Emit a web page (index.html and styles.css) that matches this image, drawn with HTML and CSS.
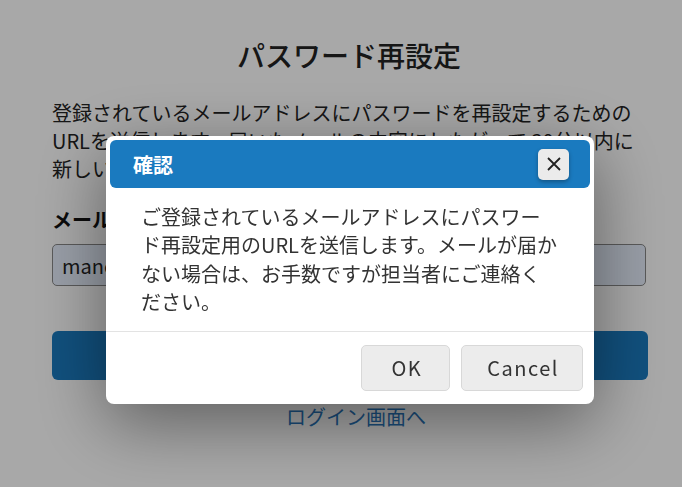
FILE: index.html
```html
<!DOCTYPE html>
<html lang="ja">
<head>
<meta charset="UTF-8">
<meta name="viewport" content="width=device-width, initial-scale=1.0">
<title>パスワード再設定</title>
<link rel="stylesheet" href="styles.css">
</head>
<body>
<div class="container">
    <h1>パスワード再設定</h1>
    <p class="lead">登録されているメールアドレスにパスワードを再設定するためのURLを送信します。届いたメールの内容にしたがって 30分以内に新しいパスワードを設定してください。</p>
    <form class="reset-form">
        <label for="email">メールアドレス</label>
        <input type="text" id="email" name="email" value="mancon@example.com">
        <button type="button" class="submit">送信する</button>
    </form>
    <a class="back-link" href="#">ログイン画面へ</a>
</div>

<div class="overlay">
    <div class="modal">
        <div class="modal-header">
            <span class="modal-title">確認</span>
            <button type="button" class="close" aria-label="閉じる">
                <svg width="14" height="14" viewBox="0 0 14 14"><path d="M1 1L13 13M13 1L1 13" stroke="#222" stroke-width="1.8" fill="none"/></svg>
            </button>
        </div>
        <div class="modal-body">ご登録されているメールアドレスにパスワード再設定用のURLを送信します。メールが届かない場合は、お手数ですが担当者にご連絡ください。</div>
        <div class="modal-footer">
            <button type="button" class="btn btn-ok">OK</button>
            <button type="button" class="btn">Cancel</button>
        </div>
    </div>
</div>
</body>
</html>
```
FILE: styles.css
```css
html {
    overflow: hidden;
}
body {
    font-family: "Noto Sans CJK JP", "Noto Sans", sans-serif;
    margin: 0;
    padding: 0;
    background-color: #fff;
    color: #333;
}
.container {
    width: 594px;
    padding: 35px 0 0 52px;
}
h1 {
    font-size: 28px;
    font-weight: 500;
    line-height: 40px;
    text-align: center;
    margin: 0 0 24px;
    color: #222;
}
.lead {
    font-size: 20px;
    line-height: 28px;
    margin: 0 0 23px;
    color: #222;
}
.reset-form label {
    display: block;
    font-size: 20px;
    font-weight: bold;
    line-height: 28px;
    margin-bottom: 10px;
    color: #111;
}
.reset-form input {
    display: block;
    width: 100%;
    height: 42px;
    padding: 0 9px;
    font-family: inherit;
    font-size: 20px;
    color: #222;
    background-color: #e8f0fe;
    border: 1px solid #888;
    border-radius: 5px;
    box-sizing: border-box;
}
.submit {
    display: block;
    width: 596px;
    height: 49px;
    margin-top: 45px;
    font-family: inherit;
    font-size: 20px;
    color: #fff;
    background-color: #1a7abf;
    border: none;
    border-radius: 6px;
}
.back-link {
    display: block;
    margin-top: 23px;
    padding-left: 14px;
    font-size: 20px;
    line-height: 28px;
    text-align: center;
    color: #2a77be;
    text-decoration: none;
}

/* dialog */
.overlay {
    position: fixed;
    inset: 0;
    background-color: rgba(0, 0, 0, 0.34);
    display: flex;
    align-items: flex-start;
    padding: 136px 0 0 106px;
}
.modal {
    width: 488px;
    background-color: #fff;
    border-radius: 8px;
    box-shadow: 0 18px 70px rgba(0, 0, 0, 0.45);
}
.modal-header {
    margin: 4px 4px 0;
    height: 48px;
    padding: 0 21px 0 23px;
    display: flex;
    align-items: center;
    justify-content: space-between;
    background-color: #1a7abf;
    border-radius: 6px;
}
.modal-title {
    font-size: 20px;
    font-weight: bold;
    color: #fff;
}
.close {
    width: 31px;
    height: 31px;
    padding: 0;
    display: flex;
    align-items: center;
    justify-content: center;
    background-color: #ebebeb;
    border: none;
    border-radius: 5px;
    box-shadow: 0 2px 4px rgba(0, 0, 0, 0.3);
}
.modal-body {
    padding: 15px 35px 14px;
    font-size: 20px;
    line-height: 28.4px;
    color: #333;
}
.modal-footer {
    border-top: 1px solid #e3e3e3;
    padding: 13px 11px 13px;
    display: flex;
    justify-content: flex-end;
    gap: 11px;
}
.btn {
    height: 46px;
    padding: 0 23px 0 25px;
    font-family: inherit;
    font-size: 20px;
    letter-spacing: 1.5px;
    color: #333;
    background-color: #ececec;
    border: 1px solid #d8d8d8;
    border-radius: 5px;
}
.btn-ok {
    min-width: 89px;
}
```
